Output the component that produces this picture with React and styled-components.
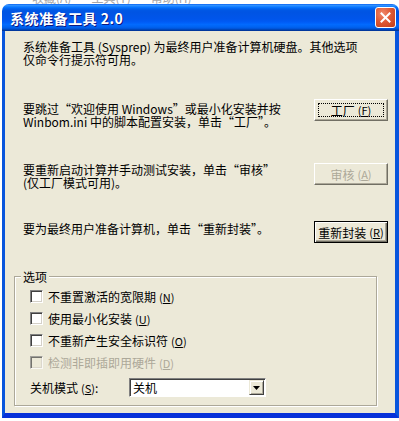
import styled, { createGlobalStyle } from "styled-components";

const GlobalStyle = createGlobalStyle`
  html, body {
    margin: 0;
    padding: 0;
    background: #ffffff;
  }
  body {
    font-family: "Noto Sans CJK SC", "DejaVu Sans", sans-serif;
    font-size: 12px;
  }
`;

const Desktop = styled.div`
  position: relative;
  width: 399px;
  height: 421px;
  overflow: hidden;
  background: #ffffff;
`;

const BackMenu = styled.div`
  display: flex;
  gap: 20px;
  padding-left: 32px;
  margin-top: -9px;
  line-height: 13px;
  color: #a8a8a8;
  font-size: 12px;
`;

const Window = styled.div`
  position: absolute;
  top: 4px;
  left: 2px;
  width: 397px;
  display: flex;
  flex-direction: column;
`;

const TitleBar = styled.div`
  height: 27px;
  border-radius: 7px 7px 0 0;
  display: flex;
  align-items: center;
  justify-content: space-between;
  padding-left: 8px;
  background: linear-gradient(
    to bottom,
    #0058ee 0%,
    #3593ff 4%,
    #288eff 7%,
    #127dff 10%,
    #036ffc 14%,
    #0262ee 18%,
    #0057e5 24%,
    #0054e3 30%,
    #0055eb 56%,
    #005bf5 66%,
    #026afe 76%,
    #0062ef 86%,
    #0052d6 92%,
    #0040ab 96%,
    #003092 100%
  );
`;

const TitleText = styled.span`
  color: #ffffff;
  font-weight: bold;
  font-size: 14px;
  letter-spacing: 0.5px;
  text-shadow: 1px 1px 0 #0a1883;
`;

const CloseButton = styled.div`
  width: 21px;
  height: 21px;
  box-sizing: border-box;
  margin-right: 3px;
  border: 1px solid #ffffff;
  border-radius: 3px;
  background: radial-gradient(circle at 35% 30%, #f08a6c 0%, #e05a36 45%, #c23c18 100%);
  display: flex;
  align-items: center;
  justify-content: center;
`;

const Frame = styled.div`
  border-left: 3px solid #0855dd;
  border-right: 4px solid #0855dd;
  border-bottom: 5px solid #0831d9;
`;

const Client = styled.div`
  background: #ece9d8;
  padding: 9px 7px 7px 9px;
  color: #000000;
`;

const Paragraph = styled.div`
  padding-left: 9px;
  line-height: 13px;
  white-space: nowrap;
  margin-top: ${(p) => p.$top || 0}px;
  padding-top: ${(p) => p.$pad || 0}px;
`;

const ActionRow = styled.div`
  display: flex;
  justify-content: space-between;
  align-items: flex-start;
  margin-top: ${(p) => p.$top}px;
`;

const Button = styled.div`
  width: 74px;
  height: 22px;
  box-sizing: border-box;
  display: flex;
  align-items: center;
  justify-content: center;
  background: #ece9d8;
  line-height: 13px;
  position: relative;
  color: ${(p) => (p.$disabled ? "#aca899" : "#000000")};
  border: 1px solid;
  border-color: ${(p) =>
    p.$default ? "#000000" : "#ffffff #716f64 #716f64 #ffffff"};
  box-shadow: ${(p) =>
    p.$default
      ? "inset 1px 1px 0 #ffffff, inset -1px -1px 0 #716f64, inset -2px -2px 0 #aca899"
      : "inset -1px -1px 0 #aca899"};

  ${(p) =>
    p.$focused &&
    `
    &::after {
      content: "";
      position: absolute;
      inset: 3px;
      border: 1px dotted #000000;
    }
  `}
`;

const Mnemonic = styled.span`
  margin-left: 3px;
  font-size: 11px;
`;

const Group = styled.fieldset`
  margin: 27px 0 0 0;
  width: 363px;
  box-sizing: border-box;
  padding: 7px 0 8px 15px;
  border: 1px solid #aca899;
  box-shadow: inset 1px 1px 0 #ffffff, 1px 1px 0 #ffffff;
  min-width: 0;
`;

const Legend = styled.legend`
  margin-left: -9px;
  padding: 0 2px;
  line-height: 13px;
  background: #ece9d8;
`;

const CheckRow = styled.label`
  display: flex;
  align-items: center;
  gap: 5px;
  height: 13px;
  line-height: 13px;
  margin-bottom: 9px;
  color: ${(p) => (p.$disabled ? "#aca899" : "#000000")};
`;

const CheckBox = styled.span`
  width: 13px;
  height: 13px;
  box-sizing: border-box;
  flex-shrink: 0;
  background: ${(p) => (p.$disabled ? "#ece9d8" : "#ffffff")};
  border-style: solid;
  border-width: 1px;
  border-color: #808080 #ffffff #ffffff #808080;
  box-shadow: inset 1px 1px 0 #404040, inset -1px -1px 0 #d4d0c8;
  opacity: ${(p) => (p.$disabled ? 0.7 : 1)};
`;

const ComboRow = styled.div`
  display: flex;
  align-items: center;
  margin-top: 3px;
`;

const ComboLabel = styled.span`
  width: 99px;
  line-height: 13px;
`;

const Combo = styled.div`
  width: 137px;
  height: 19px;
  box-sizing: border-box;
  display: flex;
  align-items: center;
  justify-content: space-between;
  background: #ffffff;
  border-style: solid;
  border-width: 1px;
  border-color: #808080 #ffffff #ffffff #808080;
  box-shadow: inset 1px 1px 0 #404040;
  padding: 1px 1px 1px 3px;
`;

const ComboText = styled.span`
  line-height: 13px;
`;

const ComboArrow = styled.span`
  width: 15px;
  height: 15px;
  box-sizing: border-box;
  display: flex;
  align-items: center;
  justify-content: center;
  background: #ece9d8;
  border: 1px solid;
  border-color: #ece9d8 #404040 #404040 #ece9d8;
  box-shadow: inset 1px 1px 0 #ffffff, inset -1px -1px 0 #aca899;
`;

const options = [
  { text: "不重置激活的宽限期", key: "N" },
  { text: "使用最小化安装", key: "U" },
  { text: "不重新产生安全标识符", key: "O" },
  { text: "检测非即插即用硬件", key: "D", disabled: true },
];

const Key = ({ k }) => (
  <Mnemonic>
    (<u>{k}</u>)
  </Mnemonic>
);

const App = () => {
  return (
    <Desktop>
      <GlobalStyle />
      <BackMenu>
        <span>收藏(A)</span>
        <span>工具(T)</span>
        <span>帮助(H)</span>
      </BackMenu>

      <Window>
        <TitleBar>
          <TitleText>系统准备工具 2.0</TitleText>
          <CloseButton>
            <svg width="11" height="11" viewBox="0 0 11 11">
              <path
                d="M1.5 1.5 L9.5 9.5 M9.5 1.5 L1.5 9.5"
                stroke="#ffffff"
                strokeWidth="2"
                strokeLinecap="square"
              />
            </svg>
          </CloseButton>
        </TitleBar>

        <Frame>
          <Client>
            <Paragraph>
              系统准备工具 (Sysprep) 为最终用户准备计算机硬盘。其他选项
              <br />
              仅命令行提示符可用。
            </Paragraph>

            <ActionRow $top={33}>
              <Paragraph $pad={3}>
                要跳过“欢迎使用 Windows”或最小化安装并按
                <br />
                Winbom.ini 中的脚本配置安装，单击“工厂”。
              </Paragraph>
              <Button $focused>
                工厂<Key k="F" />
              </Button>
            </ActionRow>

            <ActionRow $top={35}>
              <Paragraph>
                要重新启动计算并手动测试安装，单击“审核”
                <br />
                (仅工厂模式可用)。
              </Paragraph>
              <Button $disabled>
                审核<Key k="A" />
              </Button>
            </ActionRow>

            <ActionRow $top={32}>
              <Paragraph $pad={1}>要为最终用户准备计算机，单击“重新封装”。</Paragraph>
              <Button $default>
                重新封装<Key k="R" />
              </Button>
            </ActionRow>

            <Group>
              <Legend>选项</Legend>
              {options.map((o) => (
                <CheckRow key={o.key} $disabled={o.disabled}>
                  <CheckBox $disabled={o.disabled} />
                  <span>
                    {o.text}
                    <Key k={o.key} />
                  </span>
                </CheckRow>
              ))}
              <ComboRow>
                <ComboLabel>
                  关机模式<Key k="S" />:
                </ComboLabel>
                <Combo>
                  <ComboText>关机</ComboText>
                  <ComboArrow>
                    <svg width="7" height="4" viewBox="0 0 7 4">
                      <path d="M0 0 H7 L3.5 4 Z" fill="#000000" />
                    </svg>
                  </ComboArrow>
                </Combo>
              </ComboRow>
            </Group>
          </Client>
        </Frame>
      </Window>
    </Desktop>
  );
};

export default App;
